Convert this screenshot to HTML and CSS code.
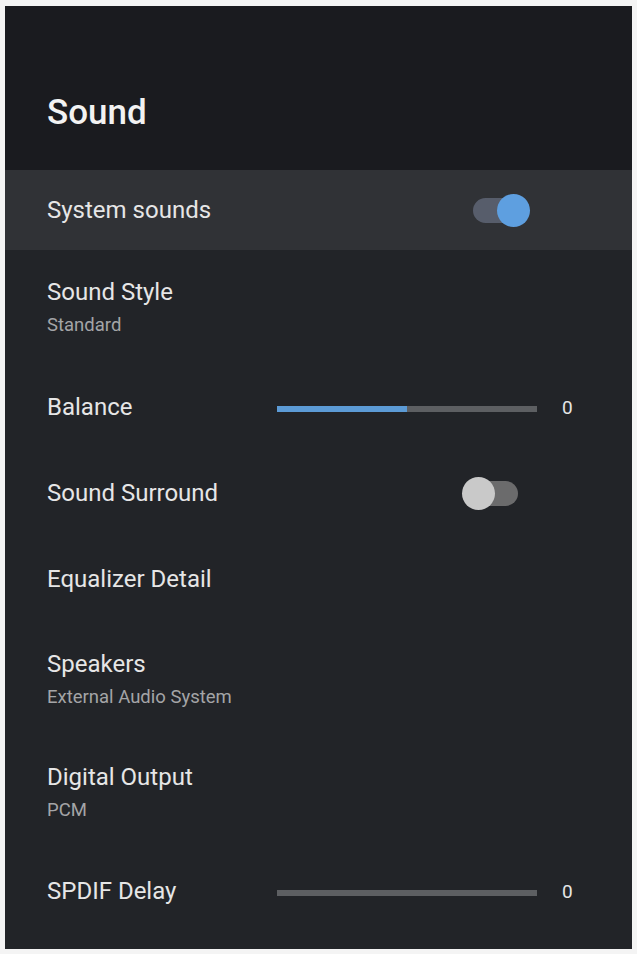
FILE: index.html
```html
<!DOCTYPE html>
<html lang="en">
<head>
    <meta charset="UTF-8">
    <meta name="viewport" content="width=device-width, initial-scale=1.0">
    <title>Sound</title>
    <link rel="stylesheet" href="styles.css">
</head>
<body>
    <div class="panel">
        <div class="header">
            <h1>Sound</h1>
        </div>
        <div class="menu">
            <div class="row row-first focused">
                <div class="label toggle-label">System sounds</div>
                <div class="toggle on"><span class="knob"></span></div>
            </div>
            <div class="row double">
                <div class="label">
                    <div class="title">Sound Style</div>
                    <div class="sub">Standard</div>
                </div>
            </div>
            <div class="row">
                <div class="label slider-label">Balance</div>
                <div class="slider"><div class="fill" style="width: 50%"></div></div>
                <div class="value">0</div>
            </div>
            <div class="row">
                <div class="label toggle-label">Sound Surround</div>
                <div class="toggle off"><span class="knob"></span></div>
            </div>
            <div class="row">
                <div class="label">Equalizer Detail</div>
            </div>
            <div class="row double">
                <div class="label">
                    <div class="title">Speakers</div>
                    <div class="sub">External Audio System</div>
                </div>
            </div>
            <div class="row double">
                <div class="label">
                    <div class="title">Digital Output</div>
                    <div class="sub">PCM</div>
                </div>
            </div>
            <div class="row">
                <div class="label slider-label">SPDIF Delay</div>
                <div class="slider"><div class="fill" style="width: 0%"></div></div>
                <div class="value">0</div>
            </div>
        </div>
    </div>
</body>
</html>
```

FILE: styles.css
```css
body {
    margin: 0;
    background-color: #f4f4f4;
    font-family: Roboto, "Liberation Sans", sans-serif;
}

.panel {
    width: 627px;
    height: 943px;
    margin: 6px 0 0 5px;
    background-color: #222428;
    color: #e6e6e6;
    overflow: hidden;
}

.header {
    height: 164px;
    box-sizing: border-box;
    padding: 87px 0 0 42px;
    background-color: #1a1b1f;
}

.header h1 {
    margin: 0;
    font-size: 35px;
    line-height: 40px;
    font-weight: 500;
    color: #f2f2f2;
}

.row {
    display: flex;
    align-items: center;
    height: 86px;
    padding-left: 42px;
    font-size: 24px;
}

.row-first {
    height: 80px;
}

.row.double {
    height: 114px;
}

.row.double:nth-child(7) {
    height: 112px;
}

.focused {
    background-color: #303236;
}

.title {
    line-height: 30px;
}

.sub {
    margin-top: 6px;
    font-size: 18.5px;
    line-height: 24px;
    color: #a4a5a7;
}

.slider-label {
    flex: 0 0 230px;
}

.slider {
    width: 260px;
    height: 6px;
    margin-top: 3px;
    background-color: #5d5f62;
}

.slider .fill {
    height: 100%;
    background-color: #5c9bd6;
}

.value {
    margin-left: 25px;
    font-size: 19px;
}

.toggle-label {
    flex: 0 0 414px;
}

.toggle {
    position: relative;
    width: 50px;
    height: 25px;
    border-radius: 13px;
}

.toggle .knob {
    position: absolute;
    top: -4px;
    width: 33px;
    height: 33px;
    border-radius: 50%;
}

.toggle.on {
    margin-left: 12px;
    width: 47px;
    background-color: #575d6b;
}

.toggle.on .knob {
    right: -10px;
    background-color: #5e9fe0;
}

.toggle.off {
    margin-left: 8px;
    width: 49px;
    background-color: #6b6b6c;
}

.toggle.off .knob {
    left: -7px;
    background-color: #c9c9c9;
}
```
